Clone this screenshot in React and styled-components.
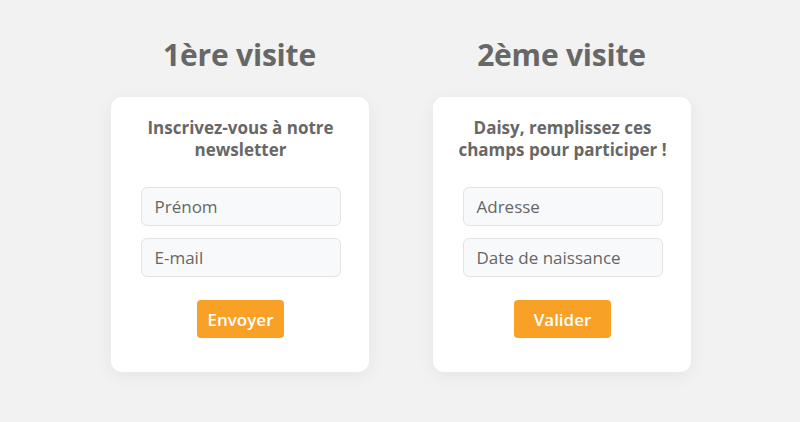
import React from "react"
import styled, { createGlobalStyle } from "styled-components"

const GlobalStyle = createGlobalStyle`
    html, body
    {
        margin: 0;
        padding: 0;
        background: #f2f2f2;
        font-family: "Open Sans", "Liberation Sans", sans-serif;
    }
`

const forms = [
    {
        heading: "1ère visite",
        title: ["Inscrivez-vous à notre", "newsletter"],
        fields: ["Prénom", "E-mail"],
        action: "Envoyer",
        actionWidth: 87
    },
    {
        heading: "2ème visite",
        title: ["Daisy, remplissez ces", "champs pour participer !"],
        fields: ["Adresse", "Date de naissance"],
        action: "Valider",
        actionWidth: 97
    }
]

const App = () =>
{
    return(
        <>
            <GlobalStyle />
            <Page>
                {forms.map((form) => (
                    <Column key={form.heading}>
                        <Heading>{form.heading}</Heading>
                        <Card>
                            <CardTitle>
                                {form.title[0]}
                                <br />
                                {form.title[1]}
                            </CardTitle>
                            <Fields>
                                {form.fields.map((field) => (
                                    <Field key={field}>{field}</Field>
                                ))}
                            </Fields>
                            <Button $width={form.actionWidth}>{form.action}</Button>
                        </Card>
                    </Column>
                ))}
            </Page>
        </>
    )
}

const Page = styled.div`

    width: 800px;
    height: 422px;
    display: flex;
    justify-content: center;
    gap: 64px;
    padding: 36px 0 0 1px;
    box-sizing: border-box;

`

const Column = styled.div`

    width: 258px;
    display: flex;
    flex-direction: column;
    align-items: center;

`

const Heading = styled.h1`

    margin: 0;
    height: 61px;
    font-size: 30px;
    line-height: 38px;
    font-weight: 700;
    color: #676767;
    letter-spacing: -0.2px;

`

const Card = styled.div`

    width: 100%;
    height: 275px;
    box-sizing: border-box;
    background: #ffffff;
    border-radius: 11px;
    box-shadow: 0 4px 18px rgba(0, 0, 0, 0.06);
    padding: 20px 28px 0 30px;
    display: flex;
    flex-direction: column;
    align-items: center;

`

const CardTitle = styled.div`

    font-size: 17px;
    line-height: 22px;
    font-weight: 700;
    color: #676767;
    text-align: center;
    white-space: nowrap;
    margin-bottom: 26px;

`

const Fields = styled.div`

    width: 100%;
    display: flex;
    flex-direction: column;
    gap: 12px;
    margin-bottom: 23px;

`

const Field = styled.div`

    height: 39px;
    box-sizing: border-box;
    border: 1px solid #e3e3e3;
    border-radius: 6px;
    background: #f8f9fa;
    padding: 0 13px;
    display: flex;
    align-items: center;
    font-size: 17px;
    color: #666666;

`

const Button = styled.button`

    width: ${(props) => props.$width}px;
    height: 38px;
    border: none;
    border-radius: 4px;
    background: #f9a027;
    color: #ffffff;
    font-family: inherit;
    font-size: 17px;
    font-weight: 600;
    cursor: pointer;

`

export default App
